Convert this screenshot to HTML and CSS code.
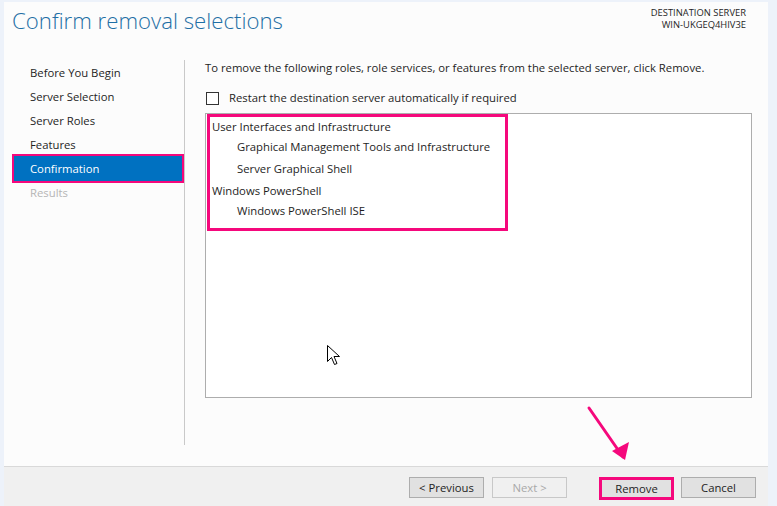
FILE: index.html
```html
<!DOCTYPE html>
<html lang="en">

<head>
    <meta charset="UTF-8" />
    <title>Remove Roles and Features Wizard</title>
    <link rel="stylesheet" href="styles.css">
</head>

<body>
    <div class="window">

        <!-- header -->
        <div class="header">
            <div class="page-title">Confirm removal selections</div>
            <div class="dest-server">
                <div>DESTINATION SERVER</div>
                <div>WIN-UKGEQ4HIV3E</div>
            </div>
        </div>

        <div class="main">
            <!-- wizard steps -->
            <ul class="steps">
                <li class="step">Before You Begin</li>
                <li class="step">Server Selection</li>
                <li class="step">Server Roles</li>
                <li class="step">Features</li>
                <li class="step selected">Confirmation</li>
                <li class="step disabled">Results</li>
            </ul>

            <!-- confirmation content -->
            <div class="content">
                <p class="intro">To remove the following roles, role services, or features from the selected server, click Remove.</p>
                <label class="check-row">
                    <span class="checkbox"></span>
                    Restart the destination server automatically if required
                </label>
                <div class="list-box">
                    <div class="marked">
                        <div class="feature-group">
                            <div class="feature">User Interfaces and Infrastructure</div>
                            <div class="sub-feature">Graphical Management Tools and Infrastructure</div>
                            <div class="sub-feature">Server Graphical Shell</div>
                        </div>
                        <div class="feature-group">
                            <div class="feature">Windows PowerShell</div>
                            <div class="sub-feature">Windows PowerShell ISE</div>
                        </div>
                    </div>
                </div>
            </div>
        </div>

        <!-- buttons -->
        <div class="footer">
            <button class="btn">&lt; Previous</button>
            <button class="btn" disabled>Next &gt;</button>
            <button class="btn btn-remove">Remove</button>
            <button class="btn">Cancel</button>
        </div>

        <!-- annotation arrow pointing at Remove -->
        <svg class="arrow" width="50" height="62" viewBox="0 0 50 62">
            <line x1="4" y1="4" x2="38" y2="53" stroke="#f5087c" stroke-width="3" stroke-linecap="round" />
            <polygon points="40,56 27,47 44,38" fill="#f5087c" />
        </svg>

        <!-- mouse pointer -->
        <svg class="cursor" width="14" height="22" viewBox="0 0 14 22">
            <path d="M0.5 0.5 L0.5 16.5 L4.5 12.5 L7.5 19.5 L10 18.5 L7 11.5 L12.5 11.5 Z" fill="white" stroke="black" stroke-width="1" stroke-linejoin="miter" />
        </svg>
    </div>
</body>

</html>
```

FILE: styles.css
```css
* {
    margin: 0;
    padding: 0;
    box-sizing: border-box;
}

body {
    background-color: #edf2fa;
    font-family: 'Open Sans', 'Noto Sans', sans-serif;
    font-size: 11.3px;
    color: #1e1e1e;
    overflow: hidden;
}

.window {
    position: relative;
    margin: 2px 0 0 4px;
    width: 764px;
    height: 504px;
    background-color: #fcfcfc;
    display: flex;
    flex-direction: column;
}

.header {
    height: 58px;
    display: flex;
    justify-content: space-between;
    align-items: flex-start;
}

.page-title {
    margin: 3px 0 0 8px;
    font-size: 22.2px;
    font-weight: 300;
    color: #1f6fa5;
}

.dest-server {
    margin: 5px 22px 0 0;
    text-align: right;
    font-size: 9.4px;
    line-height: 12px;
}

.main {
    flex: 1;
    display: flex;
}

.steps {
    list-style: none;
    width: 181px;
    height: 385px;
    padding: 1px 0 0 8px;
    border-right: 1px solid #c9c9c9;
}

.step {
    height: 24px;
    line-height: 24px;
    padding-left: 18px;
    margin-right: 1px;
}

.step.selected {
    background-color: #0071c1;
    color: white;
    box-shadow: 0 0 0 2px #f5087c;
    height: 25px;
    margin: 1px 2px 1px 2px;
    padding-left: 16px;
    line-height: 26px;
    position: relative;
    top: -2px;
}

.step.selected + .step {
    margin-top: -3px;
}

.step.disabled {
    color: #b5b5b5;
}

.content {
    flex: 1;
    padding: 0 16px 0 20px;
    display: flex;
    flex-direction: column;
}

.intro {
    line-height: 16px;
}

.check-row {
    display: flex;
    align-items: center;
    gap: 10px;
    margin: 14px 0 0 1px;
    line-height: 16px;
}

.checkbox {
    width: 13px;
    height: 13px;
    border: 1px solid #333;
    background-color: white;
}

.list-box {
    margin-top: 7px;
    height: 285px;
    background-color: white;
    border: 1px solid #adadad;
}

.marked {
    width: 301px;
    margin-left: 1px;
    border: 3px solid #f5087c;
    padding: 1px 0 6px 2px;
}

.feature-group + .feature-group {
    margin-top: 2px;
}

.feature {
    line-height: 18px;
}

.sub-feature {
    line-height: 22px;
    padding-left: 25px;
}

.footer {
    height: 40px;
    border-top: 1px solid #d9d9d9;
    background-color: #f0f0f0;
    display: flex;
    justify-content: flex-end;
    align-items: flex-start;
    padding: 10px 12px 0 0;
}

.btn {
    width: 75px;
    height: 21px;
    font-family: inherit;
    font-size: 11.3px;
    color: #1e1e1e;
    background-color: #e1e1e1;
    border: 1px solid #adadad;
    margin-left: 8px;
}

.btn:disabled {
    background-color: #f0f0f0;
    border-color: #c8c8c8;
    color: #a8a8a8;
}

.btn-remove {
    margin-left: 32px;
    border: 3px solid #f5087c;
    height: 23px;
}

.btn-remove + .btn {
    margin-left: 7px;
}

.arrow {
    position: absolute;
    left: 581px;
    top: 402px;
}

.cursor {
    position: absolute;
    left: 323px;
    top: 343px;
}
```
